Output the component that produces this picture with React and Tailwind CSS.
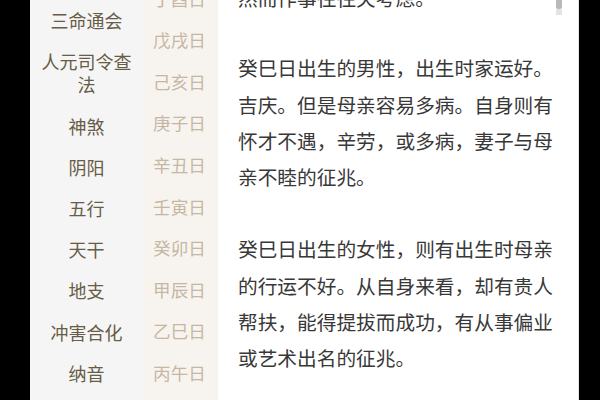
import React from "react";

const menu = [
  ["三命通会"],
  ["人元司令查", "法"],
  ["神煞"],
  ["阴阳"],
  ["五行"],
  ["天干"],
  ["地支"],
  ["冲害合化"],
  ["纳音"],
];

const days = ["丁酉日", "戊戌日", "己亥日", "庚子日", "辛丑日", "壬寅日", "癸卯日", "甲辰日", "乙巳日", "丙午日"];

const font = { fontFamily: '"Noto Sans CJK SC", "Noto Sans", sans-serif' };

export default function App() {
  return (
    <div className="w-[600px] h-[400px] overflow-hidden bg-black flex" style={font}>
      <div className="w-[30px] shrink-0 bg-black" />
      <div className="w-[113px] shrink-0 bg-[#f5f5f5] flex flex-col overflow-hidden">
        {menu.map((lines, i) => (
          <div key={i} className="shrink-0 py-[9px] px-2 text-center text-[18px] leading-[23.2px] text-[#675c47]">
            {lines.map((l, j) => (
              <div key={j}>{l}</div>
            ))}
          </div>
        ))}
      </div>
      <div className="w-[75px] shrink-0 bg-[#f7f4f0] flex flex-col overflow-hidden">
        <div className="mt-[-22px] flex flex-col">
          {days.map((d) => (
            <div key={d} className="shrink-0 h-[41.6px] flex items-center justify-center pr-[2px] text-[17.6px] text-[#c6b7a3]">
              {d}
            </div>
          ))}
        </div>
      </div>
      <div className="relative w-[361px] shrink-0 bg-white overflow-hidden border-r border-[#e6e6e6]">
        <div className="absolute left-[338px] top-0 w-[6px] h-[9px] rounded-b-[2px] bg-[#b9b9b9]" />
        <div className="absolute left-[338px] top-[9px] w-[6px] h-[6px] bg-[#e4e4e4]" />
        <div className="pl-[20px] w-[340px] text-[19.7px] leading-[36.3px] text-[#383838]">
          <p className="mt-[-20px]">然而作事往往欠考虑。</p>
          <p className="mt-[34px]">癸巳日出生的男性，出生时家运好。吉庆。但是母亲容易多病。自身则有怀才不遇，辛劳，或多病，妻子与母亲不睦的征兆。</p>
          <p className="mt-[36px]">癸巳日出生的女性，则有出生时母亲的行运不好。从自身来看，却有贵人帮扶，能得提拔而成功，有从事偏业或艺术出名的征兆。</p>
        </div>
      </div>
      <div className="flex-1 bg-black" />
    </div>
  );
}
